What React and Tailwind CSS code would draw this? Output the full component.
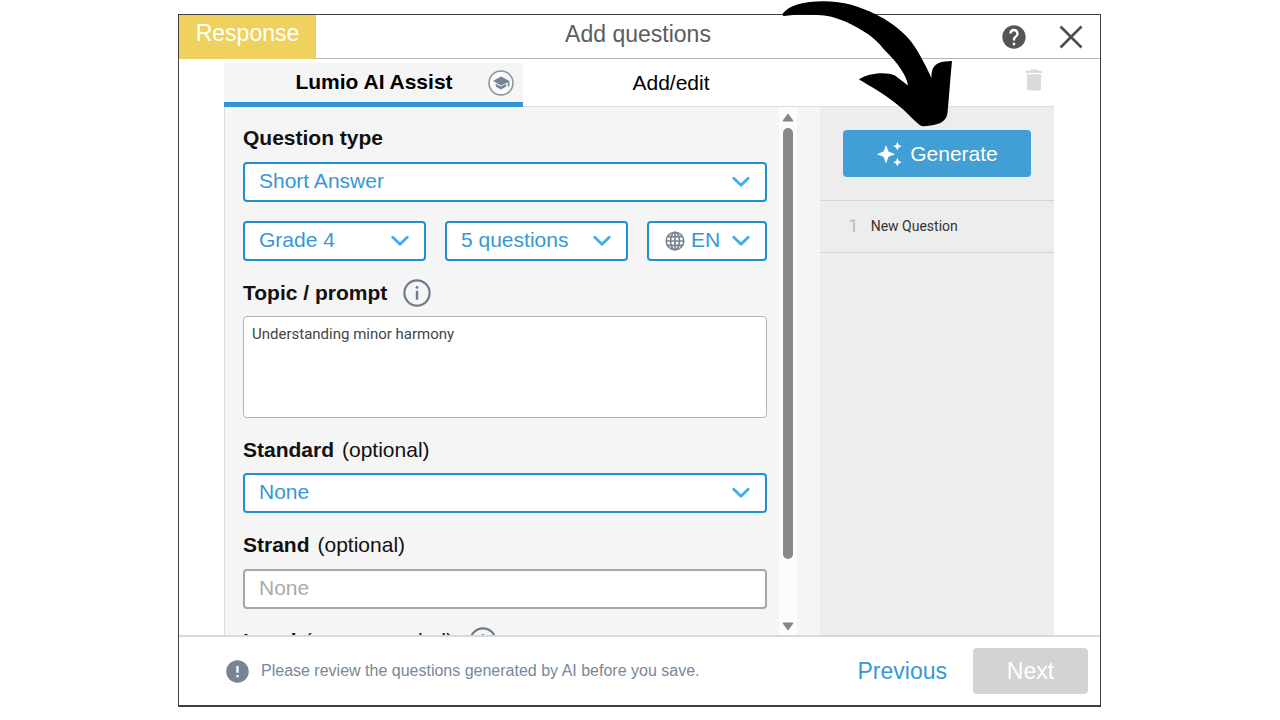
import React, { useState } from "react";
import { MdHelp, MdDelete, MdError } from "react-icons/md";

const FONT = "font-['Liberation_Sans',Arial,sans-serif]";

const Chevron = ({ className = "" }) => (
  <svg width="18" height="12" viewBox="0 0 18 12" fill="none" className={`pointer-events-none ${className}`}>
    <path d="M1.8 2.2 L9 9.2 L16.2 2.2" stroke="#3daee9" strokeWidth="2.8" strokeLinecap="round" strokeLinejoin="round" />
  </svg>
);

const GlobeIcon = () => (
  <svg width="20" height="20" viewBox="0 0 20 20" fill="none" stroke="#76828f" strokeWidth="1.6" className="pointer-events-none">
    <circle cx="10" cy="10" r="8.8" />
    <ellipse cx="10" cy="10" rx="4.4" ry="8.8" />
    <path d="M10 1.3v17.4M1.3 10h17.4M2.6 5.6h14.8M2.6 14.4h14.8" />
  </svg>
);

const InfoIcon = () => (
  <svg width="28" height="28" viewBox="0 0 28 28" fill="none">
    <circle cx="14" cy="14" r="12.6" stroke="#6c7c8c" strokeWidth="2.2" />
    <circle cx="14" cy="8.4" r="1.4" fill="#6c7c8c" />
    <path d="M14 11.8v9" stroke="#6c7c8c" strokeWidth="2.4" />
  </svg>
);

const CapIcon = () => (
  <svg width="26" height="26" viewBox="0 0 26 26" fill="none">
    <circle cx="13" cy="13" r="12" fill="#fafafa" stroke="#8391a0" strokeWidth="1.5" />
    <path d="M13 6.6 L21.4 11.1 V16.6 H19.8 V12.2 L13 15.6 L5 11.1 Z" fill="#768696" />
    <path d="M7.8 13.8 L13 16.6 L18.2 13.8 V16.4 L13 19.4 L7.8 16.4 Z" fill="#768696" />
  </svg>
);

const SparkleIcon = () => (
  <svg width="26" height="26" viewBox="0 0 26 26" fill="#fff">
    <path d="M10 4 L12.5 10.6 L19.1 13.2 L12.5 15.8 L10 22.4 L7.5 15.8 L0.9 13.2 L7.5 10.6 Z" />
    <path d="M21.4 0.8 L22.7 3.9 L25.8 5.2 L22.7 6.5 L21.4 9.6 L20.1 6.5 L17 5.2 L20.1 3.9 Z" />
    <path d="M21.4 16.8 L22.7 19.9 L25.8 21.2 L22.7 22.5 L21.4 25.6 L20.1 22.5 L17 21.2 L20.1 19.9 Z" />
  </svg>
);

const PointerArrow = () => (
  <svg width="172" height="128" viewBox="0 0 172 128" className="absolute left-[782px] top-0 pointer-events-none">
    <path
      fill="#000"
      d="M0.8 13.6 C7 5 22 1.2 41 1.2 C62 1.2 78 6.5 93 14 C106 20 118 29 127 39 C136 50 143 64 149.5 78 C149 68 153 62 163 61.4 L170 61 C168 82 167 98 165.6 112 C165 119 161 122 157 123.6 C151 125.6 146 126.2 141 126.2 C138 126.2 136 123.5 133 121 C125 113 118 106 110 100.5 C97 91 88 86 77 79.6 C86 73 104 71.6 113 75.6 L126 85.4 C125 76 115 62 103 50.5 C96 42 90 36 81 31 C68 23 53 15.4 36 15 C22 14.6 10 14.6 2 16 C0.6 16 0.2 14.8 0.8 13.6 Z"
    />
  </svg>
);

const SelectBox = ({ id, label, value, options, onChange, className = "", icon = null }) => (
  <div className={`grid items-center ${className}`}>
    <select
      id={id}
      aria-label={label}
      value={value}
      onChange={(e) => onChange(e.target.value)}
      className={`col-start-1 row-start-1 w-full h-10 appearance-none rounded border-2 border-[#1f8fd0] bg-white pb-[2px] text-[21px] leading-6 text-[#3797d6] ${icon ? "pl-[42px]" : "pl-[14px]"}`}
    >
      {options.map((o) => (
        <option key={o}>{o}</option>
      ))}
    </select>
    {icon && <span className="col-start-1 row-start-1 ml-[18px] justify-self-start pointer-events-none">{icon}</span>}
    <Chevron className="col-start-1 row-start-1 mr-[17px] justify-self-end" />
  </div>
);

const FieldLabel = ({ htmlFor, children, hint }) => (
  <label htmlFor={htmlFor} className="flex h-6 items-center gap-2 whitespace-nowrap text-[21px] leading-6 text-[#111]">
    <span className="font-bold">{children}</span>
    {hint && <span>{hint}</span>}
  </label>
);

const App = () => {
  const [type, setType] = useState("Short Answer");
  const [grade, setGrade] = useState("Grade 4");
  const [count, setCount] = useState("5 questions");
  const [lang, setLang] = useState("EN");
  const [standard, setStandard] = useState("None");
  const [topic, setTopic] = useState("Understanding minor harmony");

  return (
    <div className={`relative flex h-screen flex-col overflow-hidden bg-white pr-[179px] pl-[178px] pt-[14px] pb-[13px] ${FONT}`}>
      <div className="flex min-h-0 flex-1 flex-col border border-b-2 border-[#3f4042] bg-white">
        <header className="flex h-11 shrink-0">
          <div className="w-[137px] bg-[#efd160] pt-1 text-center text-[23px] leading-7 text-white">Response</div>
          <div className="flex flex-1 items-center justify-end border-b border-[#b5b5b5]">
            <h1 className="flex-1 pr-10 pb-[6px] text-center text-[23px] leading-7 text-[#5c5c5c]">Add questions</h1>
            <button aria-label="Help" className="mr-[31px]">
              <MdHelp size={28} color="#555" />
            </button>
            <button aria-label="Close" className="mr-[17px]">
              <svg width="24" height="24" viewBox="0 0 24 24" stroke="#4d4d4d" strokeWidth="2.6">
                <path d="M1.5 1.5 L22.5 22.5 M22.5 1.5 L1.5 22.5" />
              </svg>
            </button>
          </div>
        </header>

        <main className="mr-[46px] ml-[45px] flex min-h-0 flex-1 flex-col">
          <div className="flex h-12 shrink-0">
            <button className="mt-1 flex w-[299px] items-center border-b-[5px] border-[#3495d6] bg-[#f5f5f5] pr-[9px] text-[21px] font-bold leading-6 text-black">
              <span className="flex-1 pb-[2px] pl-9 text-center">Lumio AI Assist</span>
              <CapIcon />
            </button>
            <div className="flex flex-1 items-center border-b border-[#dedede]">
              <button className="w-[296px] text-[21px] leading-6 text-black">Add/edit</button>
              <button aria-label="Delete question" className="mr-[6px] mb-[6px] ml-auto">
                <MdDelete size={28} color="#dadada" />
              </button>
            </div>
          </div>

          <div className="flex min-h-0 flex-1">
            <section className="flex min-w-0 flex-1 overflow-hidden border-l border-[#dedede] bg-[#f5f5f5]">
              <div className="flex min-w-0 flex-1 flex-col pt-[19px] pr-3 pl-[18px]">
                <FieldLabel htmlFor="type">Question type</FieldLabel>
                <SelectBox id="type" value={type} onChange={setType} options={["Short Answer", "Multiple Choice", "True or False"]} className="mt-3" />

                <div className="mt-[19px] flex gap-[19px]">
                  <SelectBox label="Grade" value={grade} onChange={setGrade} options={["Grade 3", "Grade 4", "Grade 5"]} className="flex-1" />
                  <SelectBox label="Number of questions" value={count} onChange={setCount} options={["5 questions", "10 questions"]} className="flex-1" />
                  <SelectBox label="Language" value={lang} onChange={setLang} options={["EN", "FR", "ES"]} className="w-[120px]" icon={<GlobeIcon />} />
                </div>

                <div className="mt-5 flex h-6 items-center gap-4">
                  <FieldLabel htmlFor="topic">Topic / prompt</FieldLabel>
                  <InfoIcon />
                </div>
                <textarea
                  id="topic"
                  value={topic}
                  onChange={(e) => setTopic(e.target.value)}
                  className="mt-[11px] h-[102px] shrink-0 resize-none rounded border border-[#b3b3b3] bg-white px-2 py-[7px] font-[Roboto,sans-serif] text-[15px] leading-5 text-[#444]"
                />

                <div className="mt-5">
                  <FieldLabel htmlFor="standard" hint="(optional)">Standard</FieldLabel>
                </div>
                <SelectBox id="standard" value={standard} onChange={setStandard} options={["None", "Common Core"]} className="mt-[11px]" />

                <div className="mt-5">
                  <FieldLabel htmlFor="strand" hint="(optional)">Strand</FieldLabel>
                </div>
                <input
                  id="strand"
                  placeholder="None"
                  className="mt-3 h-10 shrink-0 rounded border-2 border-[#a6a6a6] bg-white px-[14px] pb-[2px] text-[21px] leading-6 placeholder:text-[#ababab]"
                />

                <div className="mt-5 flex h-6 shrink-0 items-center gap-4">
                  <FieldLabel hint="(recommended)">Level</FieldLabel>
                  <InfoIcon />
                </div>
              </div>

              {/* scroll track */}
              <div className="mr-[23px] flex w-[18px] flex-col items-center bg-[#fcfcfc] pt-[6px] pb-1">
                <svg width="12" height="9" viewBox="0 0 12 9" fill="#868686" stroke="#868686" strokeLinejoin="round">
                  <path d="M6 1 L11 8 H1 Z" />
                </svg>
                <div className="mt-[6px] h-[431px] w-[10px] rounded-full bg-[#8a8a8a]" />
                <svg width="12" height="9" viewBox="0 0 12 9" fill="#868686" stroke="#868686" strokeLinejoin="round" className="mt-auto">
                  <path d="M6 8 L11 1 H1 Z" />
                </svg>
              </div>
            </section>

            <aside className="w-[234px] bg-[#ededed]">
              <div className="p-[23px]">
                <button className="flex h-[47px] w-full items-center justify-center gap-2 rounded bg-[#419fd5] text-[21px] leading-6 text-white">
                  <SparkleIcon />
                  Generate
                </button>
              </div>
              <ol className="border-y border-[#d4d4d4]">
                <li className="flex h-[51px] items-center pl-7 font-[Roboto,sans-serif] text-[14px] text-[#333]">
                  <span className="mr-3 text-[19px] text-[#bdbdbd]">1</span>
                  New Question
                </li>
              </ol>
            </aside>
          </div>
        </main>

        <footer className="flex h-[70px] shrink-0 items-center border-t-2 border-[#d9d9d9] pr-3 pl-[45px]">
          <MdError size={27} color="#768591" />
          <p className="ml-[10px] flex-1 text-[16px] leading-6 text-[#76889a]">Please review the questions generated by AI before you save.</p>
          <button className="text-[23px] leading-7 text-[#3797d6]">Previous</button>
          <button disabled className="ml-[26px] h-[46px] w-[115px] rounded bg-[#d3d3d3] text-[23px] leading-7 text-white">
            Next
          </button>
        </footer>
      </div>
      <PointerArrow />
    </div>
  );
};

export default App;
